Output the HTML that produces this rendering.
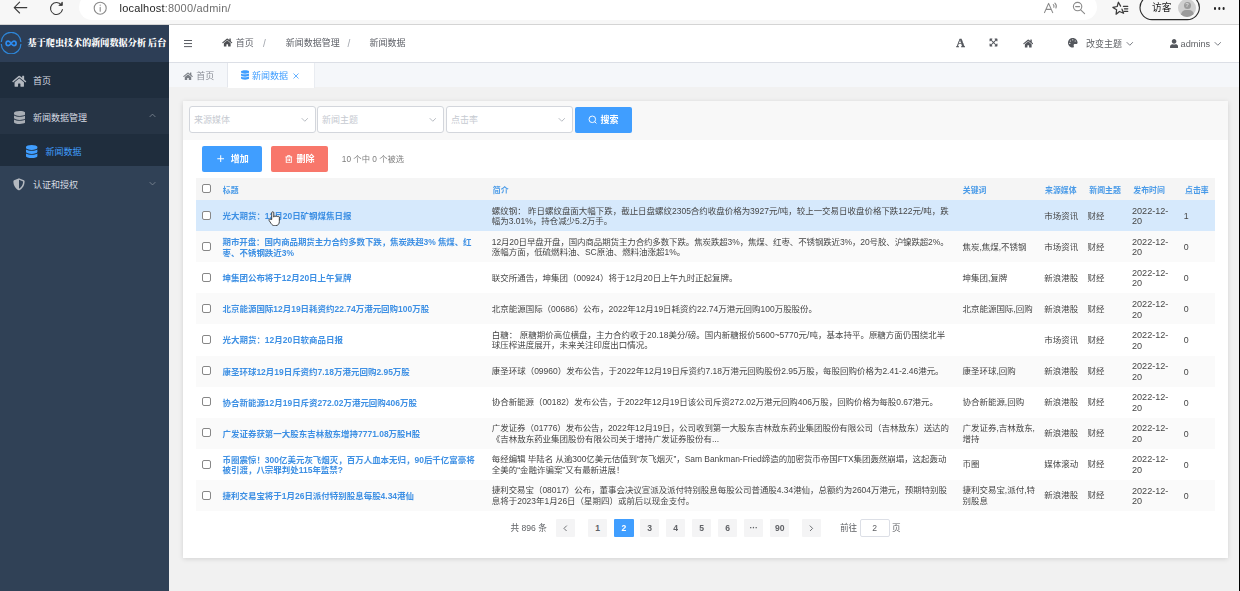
<!DOCTYPE html><html lang="zh-CN"><head><meta charset="utf-8"><title>新闻数据</title><style>
*{box-sizing:border-box;margin:0;padding:0}
html,body{width:1240px;height:591px;overflow:hidden;background:#f0f0f0;background-image:linear-gradient(to right,#304156 0,#304156 169px,#f1f1f1 169px);font-family:"Liberation Sans","Noto Sans CJK SC",sans-serif;font-size:9px;color:#606266}
#root{position:absolute;left:0;top:0;width:1240px;height:591px;overflow:hidden;filter:blur(0.300px)}
.abs{position:absolute}
#chrome{left:0;top:0;width:1240px;height:24.600px;background:#f7f7f7;border-bottom:1.400px solid #d4d4d4;z-index:5}
#pill{left:79px;top:-6px;width:1018px;height:26px;border-radius:13px;background:#fff}
#side{left:0;top:24px;width:169px;height:567px;background:#304156}
#logo{left:0;top:0;width:169px;height:38px;background:#2d3e56}
.mi{left:0;width:169px;color:#d6dbe2;font-size:9px}
.mi span{position:absolute;white-space:nowrap;line-height:12px}
#head{left:169px;top:24px;width:1071px;height:39px;background:#fff;border-bottom:1px solid #dcdfe6}
#tabs{left:169px;top:63px;width:1071px;height:24px;background:#f5f7fa}
#card{left:183px;top:101px;width:1045px;height:457px;background:#fff;box-shadow:0 1px 5px rgba(0,0,0,.13)}
#filter{left:0;top:0;width:1045px;height:39px;background:#f8f8f8}
.sel{top:5px;width:126.400px;height:27px;background:#fff;border:1px solid #d3d6dc;border-radius:3px;color:#c6cad1;font-size:9px;line-height:26.400px;padding-left:3.800px}
.btn{border-radius:2px;color:#fff;font-size:9px;font-weight:bold;white-space:nowrap}
.t{position:absolute;white-space:nowrap}
.row{left:13px;width:1019px}
.cell{position:absolute;font-size:8.470px;line-height:10.500px;white-space:nowrap;color:#464646;top:50%;transform:translateY(-50%)}
.cell.ti{color:#3e90e4;font-weight:bold;margin-top:0.500px}
.th{position:absolute;font-size:7.900px;margin-top:-0.300px;font-weight:bold;color:#4a9be8;white-space:nowrap;top:50%;transform:translateY(-50%)}
.cb{position:absolute;left:5.900px;width:9px;height:9px;border:1px solid #878787;border-radius:2px;background:#fff;top:50%;margin-top:-4.800px}
.pg{top:418px;height:18px;width:19.4px;background:#f4f4f5;color:#606266;font-size:8.6px;font-weight:bold;text-align:center;line-height:18px;border-radius:1px}
</style></head><body><div id="root">
<div id="chrome" class="abs"><div id="pill" class="abs"></div>
<svg class="abs" style="left:0;top:0" width="1240" height="24" viewBox="0 0 1240 24" fill="none" stroke="#3b3b3b" stroke-width="1.1" stroke-linecap="round" stroke-linejoin="round">
<path d="M26.800 7.600H14.300M19.600 2.200L14.200 7.600L19.600 13"/>
<path d="M61.400 5A6 6 0 1 0 62.400 9.600M62.100 2.400V5.300H59.200" /><path d="M62.100 2.800V5.300H59.600Z" fill="#3b3b3b" stroke-width="0.600"/>
<circle cx="100.2" cy="8.2" r="6" stroke="#8a8a8a"/><path d="M100.2 7.4V11.2M100.2 5V5.2" stroke="#8a8a8a"/>
<g stroke="#8a8a8a"><path d="M1044.5 12.6L1048.6 3.4L1052.7 12.6M1046 9.4H1051.2"/><path d="M1053.3 4.6A2.2 2.2 0 0 1 1053.8 7.2M1054.9 3.2A4.2 4.2 0 0 1 1055.9 8"/>
<circle cx="1077.6" cy="6.6" r="4.2"/><path d="M1080.7 9.8L1084.6 13.6M1075.6 6.6H1079.6"/></g>
<path d="M1120.6 6.1L1118.4 2.2L1117.2 6.5L1112.9 7.4L1116.6 9.8L1116.1 14.2L1119.5 11.5L1123.6 13.3L1122.0 9.2" stroke-width="1.25"/><path d="M1123.400 6.300H1127.800M1124.400 8.800H1127.800M1124 11.300H1127.800" stroke-width="1.200"/>
<rect x="1140" y="-4.4" width="59.4" height="24" rx="12" stroke="#2b2b2b"/>
</svg>
<div class="t" style="left:119.500px;top:2px;font-size:11px;line-height:13px;color:#1f1f1f;letter-spacing:0.200px">localhost<span style="color:#6e6e6e">:8000/admin/</span></div>
<div class="t" style="left:1152px;top:1.2px;font-size:9.7px;line-height:14px;color:#222">访客</div>
<div class="abs" style="left:1178px;top:-1px;width:18px;height:18px;border-radius:9px;background:#cfcfcf;overflow:hidden"><div class="abs" style="left:5.500px;top:3px;width:7px;height:7px;border-radius:4px;background:#9b9b9b;color:#dcdcdc;font-size:6px;line-height:7px;text-align:center;font-weight:bold">?</div><div class="abs" style="left:2.5px;top:11px;width:13px;height:10px;border-radius:6px;background:#9b9b9b"></div></div>
<div class="abs" style="left:1213.5px;top:7.2px;width:2.400px;height:2.400px;border-radius:2px;background:#222;box-shadow:4.300px 0 0 #222,8.600px 0 0 #222"></div>
</div>
<div id="side" class="abs">
<div id="logo" class="abs">
<svg class="abs" style="left:0px;top:8px" width="22" height="22" viewBox="0 0 22 22" fill="none"><path d="M1.300 10.100A9.800 9.800 0 0 1 20.900 10.100M20.900 12.100A9.800 9.800 0 0 1 1.300 12.100" stroke="#2e86d8" stroke-width="1.200"/><path d="M11.100 11.400c-1-1.500-1.800-2.200-2.800-2.200a2.200 2.200 0 0 0 0 4.400c1 0 1.800-0.700 2.800-2.200zm0 0c1 1.500 1.800 2.200 2.800 2.200a2.200 2.200 0 0 0 0-4.400c-1 0-1.800 0.700-2.800 2.200z" stroke="#2d8cf0" stroke-width="1.700"/></svg>
<div class="t" style="left:27.600px;top:13.200px;font-family:'Liberation Serif','Noto Serif CJK SC',serif;font-weight:900;font-size:9.1px;line-height:13px;color:#fff">基于爬虫技术的新闻数据分析 后台</div>
</div>
<div class="mi abs" style="top:38px;height:36px;background:#1f2d3d"><svg class="abs" style="left:12px;top:13px" width="14.5" height="12.5" viewBox="0 0 576 512"><path fill="#b4b9c0" d="M280 148L96 300v164a16 16 0 0 0 16 16l112-.3a16 16 0 0 0 16-16V368a16 16 0 0 1 16-16h64a16 16 0 0 1 16 16v95.600a16 16 0 0 0 16 16.100l112 .3a16 16 0 0 0 16-16V300L295.700 148a12 12 0 0 0-15.300 0zM571.600 251.500L488 182.600V44a12 12 0 0 0-12-12h-56a12 12 0 0 0-12 12v72.600L318.500 43a48 48 0 0 0-61 0L4.300 251.500a12 12 0 0 0-1.600 16.900l25.500 31a12 12 0 0 0 16.900 1.600l235.200-193.700a12 12 0 0 1 15.300 0L530.900 301a12 12 0 0 0 16.900-1.600l25.500-31a12 12 0 0 0-1.700-16.900z"/></svg><span style="left:33px;top:12.5px">首页</span></div>
<div class="mi abs" style="top:74px;height:36px;background:#263445"><svg class="abs" style="left:13.5px;top:13.2px" width="11.4" height="13" viewBox="0 0 448 512"><path fill="#a9aeb5" d="M448 73v46c0 40-100 73-224 73S0 159 0 119V73C0 33 100 0 224 0s224 33 224 73zm0 103v103c0 40-100 73-224 73S0 319 0 279V176c48 33 136 48 224 48s176-15 224-48zm0 160v103c0 40-100 73-224 73S0 479 0 439V336c48 33 136 48 224 48s176-15 224-48z"/></svg><span style="left:33px;top:13.500px">新闻数据管理</span><svg class="abs" style="left:149.3px;top:15.2px" width="7" height="5.031249999999999" viewBox="0 0 6.4 4.6" fill="none" stroke="#7d8794" stroke-width="0.8"><path d="M0.6 3.6L3.2 1L5.8 3.6"/></svg></div>
<div class="mi abs" style="top:110.400px;height:31.900px;background:#1f2d3d;color:#409eff"><svg class="abs" style="left:26.3px;top:10.8px" width="11.4" height="13" viewBox="0 0 448 512"><path fill="#409eff" d="M448 73v46c0 40-100 73-224 73S0 159 0 119V73C0 33 100 0 224 0s224 33 224 73zm0 103v103c0 40-100 73-224 73S0 319 0 279V176c48 33 136 48 224 48s176-15 224-48zm0 160v103c0 40-100 73-224 73S0 479 0 439V336c48 33 136 48 224 48s176-15 224-48z"/></svg><span style="left:45.500px;top:11.400px">新闻数据</span></div>
<div class="mi abs" style="top:142.300px;height:36px;background:#304156"><svg class="abs" style="left:13.3px;top:12px" width="12" height="12.6" viewBox="0 0 512 512"><path fill="#b4b9c0" d="M466.500 83.700l-192-80a48 48 0 0 0-36.900 0l-192 80C27.700 91.100 16 108.600 16 128c0 198.500 114.500 335.700 221.500 380.300 11.800 4.900 25.100 4.900 36.900 0C360.100 472.600 496 349.300 496 128c0-19.400-11.700-36.900-29.500-44.300zM256.100 446.300l-.1-381 175.900 73.300c-3.300 151.400-82.100 261.100-175.800 307.700z"/></svg><span style="left:33px;top:13px">认证和授权</span><svg class="abs" style="left:149.3px;top:15px" width="7" height="5.031249999999999" viewBox="0 0 6.4 4.6" fill="none" stroke="#7d8794" stroke-width="0.8"><path d="M0.6 1L3.2 3.6L5.8 1"/></svg></div>
</div>
<div id="head" class="abs">
<div class="abs" style="left:14.800px;top:15.500px;width:8.200px;height:1.900px;background:#5a5d63;box-shadow:0 3.050px 0 #5a5d63,0 6.100px 0 #5a5d63"></div>
<svg class="abs" style="left:53px;top:14.3px" width="10.5" height="9" viewBox="0 0 576 512"><path fill="#4d4f53" d="M280 148L96 300v164a16 16 0 0 0 16 16l112-.3a16 16 0 0 0 16-16V368a16 16 0 0 1 16-16h64a16 16 0 0 1 16 16v95.600a16 16 0 0 0 16 16.100l112 .3a16 16 0 0 0 16-16V300L295.700 148a12 12 0 0 0-15.300 0zM571.600 251.500L488 182.600V44a12 12 0 0 0-12-12h-56a12 12 0 0 0-12 12v72.600L318.500 43a48 48 0 0 0-61 0L4.300 251.500a12 12 0 0 0-1.600 16.900l25.500 31a12 12 0 0 0 16.900 1.600l235.200-193.700a12 12 0 0 1 15.300 0L530.900 301a12 12 0 0 0 16.900-1.600l25.500-31a12 12 0 0 0-1.700-16.900z"/></svg>
<div class="t" style="left:66.700px;top:12.500px;font-size:9px;line-height:13px;color:#5c5f66">首页</div>
<div class="t" style="left:94px;top:12.500px;font-size:10px;line-height:13px;color:#a3a7ae">/</div>
<div class="t" style="left:116.700px;top:12.500px;font-size:9px;line-height:13px;color:#5c5f66">新闻数据管理</div>
<div class="t" style="left:178.500px;top:12.500px;font-size:10px;line-height:13px;color:#a3a7ae">/</div>
<div class="t" style="left:200.500px;top:12.500px;font-size:9px;line-height:13px;color:#5c5f66">新闻数据</div>
<div class="t" style="left:787.300px;top:11.700px;font-family:'Liberation Serif',serif;font-weight:bold;font-size:12px;line-height:14px;color:#54575d;-webkit-text-stroke:0.350px #54575d">A</div>
<svg class="abs" style="left:820.400px;top:14.300px" width="9" height="9" viewBox="0 0 448 512"><path fill="#54575d" d="M448 344v112a23.900 23.900 0 0 1-24 24H312c-21.400 0-32.100-25.900-17-41l36.200-36.200L224 295.600 116.800 402.900 153 439c15.100 15.100 4.400 41-17 41H24a23.900 23.900 0 0 1-24-24V344c0-21.400 25.900-32.100 41-17l36.200 36.200L184.500 256 77.200 148.700 41 185c-15.100 15.100-41 4.400-41-17V56a23.900 23.900 0 0 1 24-24h112c21.400 0 32.100 25.900 17 41l-36.200 36.200L224 216.400l107.200-107.300L295 73c-15.100-15.100-4.400-41 17-41h112a23.900 23.900 0 0 1 24 24v112c0 21.400-25.900 32.100-41 17l-36.200-36.200L263.500 256l107.300 107.300L407 327.100c15.100-15.200 41-4.500 41 16.900z"/></svg>
<svg class="abs" style="left:853.6px;top:14.7px" width="10.5" height="9" viewBox="0 0 576 512"><path fill="#54575d" d="M280 148L96 300v164a16 16 0 0 0 16 16l112-.3a16 16 0 0 0 16-16V368a16 16 0 0 1 16-16h64a16 16 0 0 1 16 16v95.600a16 16 0 0 0 16 16.100l112 .3a16 16 0 0 0 16-16V300L295.700 148a12 12 0 0 0-15.300 0zM571.600 251.500L488 182.600V44a12 12 0 0 0-12-12h-56a12 12 0 0 0-12 12v72.600L318.500 43a48 48 0 0 0-61 0L4.300 251.500a12 12 0 0 0-1.600 16.900l25.500 31a12 12 0 0 0 16.900 1.600l235.200-193.700a12 12 0 0 1 15.300 0L530.900 301a12 12 0 0 0 16.900-1.600l25.500-31a12 12 0 0 0-1.700-16.900z"/></svg>
<svg class="abs" style="left:899.300px;top:14.400px" width="9.600" height="9.600" viewBox="0 0 512 512"><path fill="#54575d" d="M204.300 5C104.900 24.400 24.800 104.300 5.200 203.400c-37 187 131.700 326.400 258.800 306.700 41.200-6.400 61.400-54.600 42.500-91.700-23.100-45.400 9.900-98.400 60.900-98.400h79.700c35.800 0 64.800-29.600 64.900-65.300C511.500 97.100 368.100-26.900 204.300 5zM96 320c-17.700 0-32-14.300-32-32s14.300-32 32-32 32 14.300 32 32-14.300 32-32 32zm32-128c-17.700 0-32-14.300-32-32s14.300-32 32-32 32 14.300 32 32-14.300 32-32 32zm128-64c-17.700 0-32-14.300-32-32s14.300-32 32-32 32 14.300 32 32-14.300 32-32 32zm128 64c-17.700 0-32-14.300-32-32s14.300-32 32-32 32 14.300 32 32-14.300 32-32 32z"/></svg>
<div class="t" style="left:917px;top:13.600px;font-size:9px;line-height:13px;color:#606266">改变主题</div>
<svg class="abs" style="left:957.2px;top:16.5px" width="7.6" height="5.462499999999999" viewBox="0 0 6.4 4.6" fill="none" stroke="#73777e" stroke-width="0.8"><path d="M0.6 1L3.2 3.6L5.8 1"/></svg>
<svg class="abs" style="left:1000.700px;top:14.500px" width="8.200" height="9.300" viewBox="0 0 448 512"><path fill="#54575d" d="M224 256c70.700 0 128-57.300 128-128S294.700 0 224 0 96 57.300 96 128s57.300 128 128 128zm89.600 32h-16.700c-22.200 10.200-46.900 16-72.900 16s-50.600-5.800-72.900-16h-16.700C60.200 288 0 348.200 0 422.400V464c0 26.500 21.500 48 48 48h352c26.500 0 48-21.500 48-48v-41.600c0-74.200-60.200-134.400-134.400-134.400z"/></svg>
<div class="t" style="left:1011.600px;top:13.500px;font-size:9.200px;line-height:13px;color:#606266">admins</div>
<svg class="abs" style="left:1044.6px;top:16.5px" width="7.6" height="5.462499999999999" viewBox="0 0 6.4 4.6" fill="none" stroke="#73777e" stroke-width="0.8"><path d="M0.6 1L3.2 3.6L5.8 1"/></svg>
</div>
<div id="tabs" class="abs">
<div class="abs" style="left:0;top:0;width:59px;height:24px;border-right:1px solid #e4e7ed"></div>
<svg class="abs" style="left:14px;top:8.5px" width="10" height="8.6" viewBox="0 0 576 512"><path fill="#7b7f86" d="M280 148L96 300v164a16 16 0 0 0 16 16l112-.3a16 16 0 0 0 16-16V368a16 16 0 0 1 16-16h64a16 16 0 0 1 16 16v95.600a16 16 0 0 0 16 16.100l112 .3a16 16 0 0 0 16-16V300L295.700 148a12 12 0 0 0-15.300 0zM571.600 251.500L488 182.600V44a12 12 0 0 0-12-12h-56a12 12 0 0 0-12 12v72.600L318.500 43a48 48 0 0 0-61 0L4.300 251.500a12 12 0 0 0-1.600 16.900l25.500 31a12 12 0 0 0 16.900 1.600l235.200-193.700a12 12 0 0 1 15.300 0L530.900 301a12 12 0 0 0 16.900-1.600l25.500-31a12 12 0 0 0-1.700-16.900z"/></svg>
<div class="t" style="left:27.300px;top:7.100px;font-size:9px;line-height:13px;color:#8a8e96">首页</div>
<div class="abs" style="left:59px;top:0;width:86.600px;height:24.500px;background:#fff;border-right:1px solid #e9ecf1"></div>
<svg class="abs" style="left:71.7px;top:7.4px" width="8.3" height="9.8" viewBox="0 0 448 512"><path fill="#409eff" d="M448 73v46c0 40-100 73-224 73S0 159 0 119V73C0 33 100 0 224 0s224 33 224 73zm0 103v103c0 40-100 73-224 73S0 319 0 279V176c48 33 136 48 224 48s176-15 224-48zm0 160v103c0 40-100 73-224 73S0 479 0 439V336c48 33 136 48 224 48s176-15 224-48z"/></svg>
<div class="t" style="left:83px;top:7.100px;font-size:9px;line-height:13px;color:#409eff">新闻数据</div>
<svg class="abs" style="left:124.400px;top:9.800px" width="6" height="6" viewBox="0 0 6 6" stroke="#409eff" stroke-width="0.8"><path d="M0.500 0.500L5.500 5.500M5.500 0.500L0.500 5.500"/></svg>
</div>
<div id="card" class="abs">
<div id="filter" class="abs">
<div class="sel abs" style="left:6.2px">来源媒体<svg class="abs" style="left:110.5px;top:10.2px" width="7.6" height="5.462499999999999" viewBox="0 0 6.4 4.6" fill="none" stroke="#b4b8c0" stroke-width="0.8"><path d="M0.6 1L3.2 3.6L5.8 1"/></svg></div>
<div class="sel abs" style="left:134.3px">新闻主题<svg class="abs" style="left:110.5px;top:10.2px" width="7.6" height="5.462499999999999" viewBox="0 0 6.4 4.6" fill="none" stroke="#b4b8c0" stroke-width="0.8"><path d="M0.6 1L3.2 3.6L5.8 1"/></svg></div>
<div class="sel abs" style="left:263.2px">点击率<svg class="abs" style="left:110.5px;top:10.2px" width="7.6" height="5.462499999999999" viewBox="0 0 6.4 4.6" fill="none" stroke="#b4b8c0" stroke-width="0.8"><path d="M0.6 1L3.2 3.6L5.8 1"/></svg></div>
<div class="btn abs" style="left:391.600px;top:5.500px;width:57.400px;height:26.400px;background:#409eff"><svg class="abs" style="left:13.500px;top:8.500px" width="9.400" height="9.400" viewBox="0 0 10 10" fill="none" stroke="#fff" stroke-width="1"><circle cx="4.600" cy="4.600" r="3.500"/><path d="M7.200 7.200L9 9"/></svg><span class="t" style="left:26px;top:7px;line-height:12px">搜索</span></div>
</div>
<div class="btn abs" style="left:19px;top:45px;width:60px;height:26px;background:#409eff"><svg class="abs" style="left:14.800px;top:9.300px" width="7.400" height="7.400" viewBox="0 0 8 8" stroke="#fff" stroke-width="1.100"><path d="M4 0.300V7.700M0.300 4H7.700"/></svg><span class="t" style="left:28.800px;top:7px;line-height:12px">增加</span></div>
<div class="btn abs" style="left:87.800px;top:45px;width:57.500px;height:26px;background:#f8776b"><svg class="abs" style="left:14.200px;top:8.800px" width="7.600" height="8.400" viewBox="0 0 9 10" fill="none" stroke="#fff" stroke-width="1.150"><path d="M0.500 2.300H8.500M3 2.300V0.800H6V2.300M1.500 2.300V9.300H7.500V2.300M3.600 4.300V7.300M5.400 4.300V7.300"/></svg><span class="t" style="left:25.600px;top:7px;line-height:12px">删除</span></div>
<div class="t" style="left:158.800px;top:52px;font-size:8.300px;line-height:12px;color:#7e7e7e">10 个中 0 个被选</div>
<div class="row abs" style="top:77.400px;height:21.600px;background:#f5f5f5">
<div class="cb"></div>
<div class="th" style="left:26.8px">标题</div>
<div class="th" style="left:296.8px">简介</div>
<div class="th" style="left:766.8px">关键词</div>
<div class="th" style="left:849px">来源媒体</div>
<div class="th" style="left:893.3px">新闻主题</div>
<div class="th" style="left:937.3px">发布时间</div>
<div class="th" style="left:989px">点击率</div>
</div>
<div class="row abs" style="top:99.0px;height:31.1px;background:#d6e9fc">
<div class="cb"></div>
<div class="cell ti" style="left:26.500px">光大期货：12月20日矿钢煤焦日报</div>
<div class="cell" style="left:295.800px">螺纹钢： 昨日螺纹盘面大幅下跌，截止日盘螺纹2305合约收盘价格为3927元/吨，较上一交易日收盘价格下跌122元/吨，跌<br>幅为3.01%，持仓减少5.2万手。</div>
<div class="cell" style="left:848.300px">市场资讯</div>
<div class="cell" style="left:891.500px">财经</div>
<div class="cell" style="left:936px;font-size:9.100px;line-height:10.600px;margin-top:1.100px">2022-12-<br>20</div>
<div class="cell" style="left:987.800px;font-size:8.800px;margin-top:0.500px">1</div>
</div>
<div class="row abs" style="top:130.1px;height:31.1px;background:#fafafa">
<div class="cb"></div>
<div class="cell ti" style="left:26.500px"><span style="letter-spacing:-0.09px">期市开盘：国内商品期货主力合约多数下跌，焦炭跌超3% 焦煤、红</span><br>枣、不锈钢跌近3%</div>
<div class="cell" style="left:295.800px"><span style="letter-spacing:-0.107px">12月20日早盘开盘，国内商品期货主力合约多数下跌。焦炭跌超3%，焦煤、红枣、不锈钢跌近3%，20号胶、沪镍跌超2%。</span><br>涨幅方面，低硫燃料油、SC原油、燃料油涨超1%。</div>
<div class="cell" style="left:766.500px">焦炭,焦煤,不锈钢</div>
<div class="cell" style="left:848.300px">市场资讯</div>
<div class="cell" style="left:891.500px">财经</div>
<div class="cell" style="left:936px;font-size:9.100px;line-height:10.600px;margin-top:1.100px">2022-12-<br>20</div>
<div class="cell" style="left:987.800px;font-size:8.800px;margin-top:0.500px">0</div>
</div>
<div class="row abs" style="top:161.2px;height:31.1px;background:#fff">
<div class="cb"></div>
<div class="cell ti" style="left:26.500px">坤集团公布将于12月20日上午复牌</div>
<div class="cell" style="left:295.800px">联交所通告，坤集团（00924）将于12月20日上午九时正起复牌。</div>
<div class="cell" style="left:766.500px">坤集团,复牌</div>
<div class="cell" style="left:848.300px">新浪港股</div>
<div class="cell" style="left:891.500px">财经</div>
<div class="cell" style="left:936px;font-size:9.100px;line-height:10.600px;margin-top:1.100px">2022-12-<br>20</div>
<div class="cell" style="left:987.800px;font-size:8.800px;margin-top:0.500px">0</div>
</div>
<div class="row abs" style="top:192.3px;height:31.1px;background:#fafafa">
<div class="cb"></div>
<div class="cell ti" style="left:26.500px">北京能源国际12月19日耗资约22.74万港元回购100万股</div>
<div class="cell" style="left:295.800px">北京能源国际（00686）公布，2022年12月19日耗资约22.74万港元回购100万股股份。</div>
<div class="cell" style="left:766.500px">北京能源国际,回购</div>
<div class="cell" style="left:848.300px">新浪港股</div>
<div class="cell" style="left:891.500px">财经</div>
<div class="cell" style="left:936px;font-size:9.100px;line-height:10.600px;margin-top:1.100px">2022-12-<br>20</div>
<div class="cell" style="left:987.800px;font-size:8.800px;margin-top:0.500px">0</div>
</div>
<div class="row abs" style="top:223.4px;height:31.1px;background:#fff">
<div class="cb"></div>
<div class="cell ti" style="left:26.500px">光大期货：12月20日软商品日报</div>
<div class="cell" style="left:295.800px"><span style="letter-spacing:0.025px">白糖： 原糖期价高位横盘，主力合约收于20.18美分/磅。国内新糖报价5600~5770元/吨，基本持平。原糖方面仍围绕北半</span><br>球压榨进度展开，未来关注印度出口情况。</div>
<div class="cell" style="left:848.300px">市场资讯</div>
<div class="cell" style="left:891.500px">财经</div>
<div class="cell" style="left:936px;font-size:9.100px;line-height:10.600px;margin-top:1.100px">2022-12-<br>20</div>
<div class="cell" style="left:987.800px;font-size:8.800px;margin-top:0.500px">0</div>
</div>
<div class="row abs" style="top:254.5px;height:31.1px;background:#fafafa">
<div class="cb"></div>
<div class="cell ti" style="left:26.500px">康圣环球12月19日斥资约7.18万港元回购2.95万股</div>
<div class="cell" style="left:295.800px">康圣环球（09960）发布公告，于2022年12月19日斥资约7.18万港元回购股份2.95万股，每股回购价格为2.41-2.46港元。</div>
<div class="cell" style="left:766.500px">康圣环球,回购</div>
<div class="cell" style="left:848.300px">新浪港股</div>
<div class="cell" style="left:891.500px">财经</div>
<div class="cell" style="left:936px;font-size:9.100px;line-height:10.600px;margin-top:1.100px">2022-12-<br>20</div>
<div class="cell" style="left:987.800px;font-size:8.800px;margin-top:0.500px">0</div>
</div>
<div class="row abs" style="top:285.6px;height:31.1px;background:#fff">
<div class="cb"></div>
<div class="cell ti" style="left:26.500px">协合新能源12月19日斥资272.02万港元回购406万股</div>
<div class="cell" style="left:295.800px"><span style="letter-spacing:-0.03px">协合新能源（00182）发布公告，于2022年12月19日该公司斥资272.02万港元回购406万股，回购价格为每股0.67港元。</span></div>
<div class="cell" style="left:766.500px">协合新能源,回购</div>
<div class="cell" style="left:848.300px">新浪港股</div>
<div class="cell" style="left:891.500px">财经</div>
<div class="cell" style="left:936px;font-size:9.100px;line-height:10.600px;margin-top:1.100px">2022-12-<br>20</div>
<div class="cell" style="left:987.800px;font-size:8.800px;margin-top:0.500px">0</div>
</div>
<div class="row abs" style="top:316.7px;height:31.1px;background:#fafafa">
<div class="cb"></div>
<div class="cell ti" style="left:26.500px">广发证券获第一大股东吉林敖东增持7771.08万股H股</div>
<div class="cell" style="left:295.800px"><span style="letter-spacing:-0.035px">广发证券（01776）发布公告，2022年12月19日，公司收到第一大股东吉林敖东药业集团股份有限公司（吉林敖东）送达的</span><br>《吉林敖东药业集团股份有限公司关于增持广发证券股份有...</div>
<div class="cell" style="left:766.500px">广发证券,吉林敖东,<br>增持</div>
<div class="cell" style="left:848.300px">新浪港股</div>
<div class="cell" style="left:891.500px">财经</div>
<div class="cell" style="left:936px;font-size:9.100px;line-height:10.600px;margin-top:1.100px">2022-12-<br>20</div>
<div class="cell" style="left:987.800px;font-size:8.800px;margin-top:0.500px">0</div>
</div>
<div class="row abs" style="top:347.8px;height:31.1px;background:#fff">
<div class="cb"></div>
<div class="cell ti" style="left:26.500px">币圈震惊！300亿美元灰飞烟灭，百万人血本无归，90后千亿富豪将<br>被引渡，八宗罪判处115年监禁?</div>
<div class="cell" style="left:295.800px"><span style="letter-spacing:-0.035px">每经编辑 毕陆名 从逾300亿美元估值到“灰飞烟灭”，Sam Bankman-Fried缔造的加密货币帝国FTX集团轰然崩塌，这起轰动</span><br>全美的“金融诈骗案”又有最新进展！</div>
<div class="cell" style="left:766.500px">币圈</div>
<div class="cell" style="left:848.300px">媒体滚动</div>
<div class="cell" style="left:891.500px">财经</div>
<div class="cell" style="left:936px;font-size:9.100px;line-height:10.600px;margin-top:1.100px">2022-12-<br>20</div>
<div class="cell" style="left:987.800px;font-size:8.800px;margin-top:0.500px">0</div>
</div>
<div class="row abs" style="top:378.9px;height:31.1px;background:#fafafa">
<div class="cb"></div>
<div class="cell ti" style="left:26.500px">捷利交易宝将于1月26日派付特别股息每股4.34港仙</div>
<div class="cell" style="left:295.800px"><span style="letter-spacing:-0.03px">捷利交易宝（08017）公布，董事会决议宣派及派付特别股息每股公司普通股4.34港仙，总额约为2604万港元，预期特别股</span><br>息将于2023年1月26日（星期四）或前后以现金支付。</div>
<div class="cell" style="left:766.500px">捷利交易宝,派付,特<br>别股息</div>
<div class="cell" style="left:848.300px">新浪港股</div>
<div class="cell" style="left:891.500px">财经</div>
<div class="cell" style="left:936px;font-size:9.100px;line-height:10.600px;margin-top:1.100px">2022-12-<br>20</div>
<div class="cell" style="left:987.800px;font-size:8.800px;margin-top:0.500px">0</div>
</div>
<div class="t" style="left:327.500px;top:421px;font-size:8.600px;line-height:12px;color:#606266">共 896 条</div>
<div class="pg abs" style="left:372.800px"><svg style="margin-top:5.600px" width="4.600" height="6.800" viewBox="0 0 4.600 6.800" fill="none" stroke="#606266" stroke-width="0.9"><path d="M3.800 0.600L1 3.400L3.800 6.200"/></svg></div>
<div class="pg abs" style="left:405px;">1</div>
<div class="pg abs" style="left:431.2px;background:#409eff;color:#fff;">2</div>
<div class="pg abs" style="left:457px;">3</div>
<div class="pg abs" style="left:483px;">4</div>
<div class="pg abs" style="left:509px;">5</div>
<div class="pg abs" style="left:535px;">6</div>
<div class="pg abs" style="left:561px;">···</div>
<div class="pg abs" style="left:587px;">90</div>
<div class="pg abs" style="left:619px"><svg style="margin-top:5.600px" width="4.600" height="6.800" viewBox="0 0 4.600 6.800" fill="none" stroke="#606266" stroke-width="0.9"><path d="M0.800 0.600L3.600 3.400L0.800 6.200"/></svg></div>
<div class="t" style="left:657px;top:421px;font-size:8.600px;line-height:12px;color:#606266">前往</div>
<div class="abs" style="left:677px;top:418.300px;width:29.500px;height:18.200px;border:1px solid #dcdfe6;border-radius:2px;background:#fff;text-align:center;font-size:8.600px;line-height:16.400px;color:#606266">2</div>
<div class="t" style="left:709px;top:421px;font-size:8.600px;line-height:12px;color:#606266">页</div>
</div>
<svg class="abs" style="left:268px;top:210.600px" width="12.400" height="15.800" viewBox="0 0 12 15"><path d="M3.600 8.200V1.600a1 1 0 0 1 2 0V5.800l0.300-0.700a0.900 0.900 0 0 1 1.700 0.300l0.200-0.300a0.900 0.900 0 0 1 1.600 0.500l0.200-0.200a0.800 0.800 0 0 1 1.400 0.600V10c0 2.400-1.400 4-3.600 4H6.400c-1.600 0-2.500-0.700-3.400-2L1 8.900c-0.500-0.800 0.500-1.600 1.200-1z" fill="#fff" stroke="#222" stroke-width="0.800" stroke-linejoin="round"/></svg>
</div>
<div class="abs" style="left:1238.700px;top:0;width:1.300px;height:591px;background:#000"></div>
</body></html>
